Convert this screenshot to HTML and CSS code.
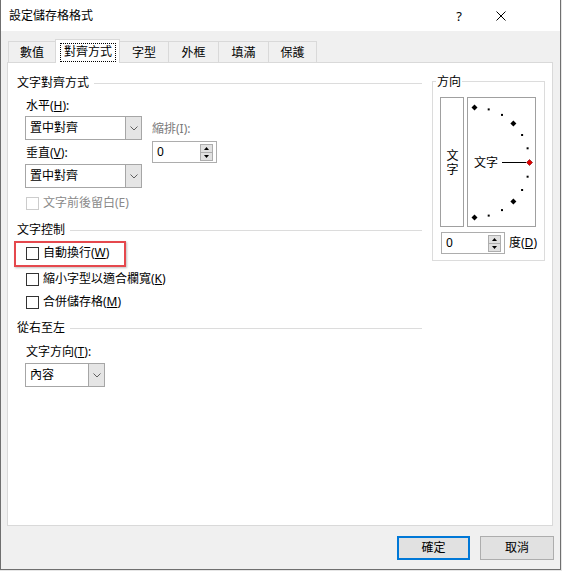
FILE: index.html
```html
<!DOCTYPE html>
<html lang="zh-Hant">
<head>
<meta charset="utf-8">
<title>設定儲存格格式</title>
<link rel="stylesheet" href="styles.css">
</head>
<body>
<div class="dialog">
  <div class="titlebar">
    <span class="title">設定儲存格格式</span>
    <span class="help">?</span>
    <span class="close"><svg width="10" height="10" viewBox="0 0 10 10"><path d="M0.5 0.5L9.5 9.5M9.5 0.5L0.5 9.5" stroke="#000" stroke-width="1" fill="none"/></svg></span>
  </div>

  <div class="tabs">
    <div class="tab t1">數值</div>
    <div class="tab t2 active"><span class="focus">對齊方式</span></div>
    <div class="tab t3">字型</div>
    <div class="tab t4">外框</div>
    <div class="tab t5">填滿</div>
    <div class="tab t6">保護</div>
  </div>

  <div class="panel">
    <div class="left">
      <div class="ghead ghead1"><span>文字對齊方式</span><i class="gline"></i></div>
      <div class="grid1">
        <div class="lbl">水平(<u>H</u>):</div>
        <div></div>
        <div class="combo"><span class="val">置中對齊</span><span class="arrow"><svg width="8" height="5" viewBox="0 0 8 5"><path d="M0.5 0.5L4 4L7.5 0.5" stroke="#5f5f5f" fill="none"/></svg></span></div>
        <div class="lbl grey indent-lbl">縮排(I):</div>
        <div class="lbl row3lbl">垂直(<u>V</u>):</div>
        <div class="spin spin1"><span class="sval">0</span><span class="sbtns"><span class="sb"><svg width="5" height="3" viewBox="0 0 5 3"><path d="M0 3L2.5 0L5 3Z" fill="#000"/></svg></span><span class="sb"><svg width="5" height="3" viewBox="0 0 5 3"><path d="M0 0L2.5 3L5 0Z" fill="#000"/></svg></span></span></div>
        <div class="combo"><span class="val">置中對齊</span><span class="arrow"><svg width="8" height="5" viewBox="0 0 8 5"><path d="M0.5 0.5L4 4L7.5 0.5" stroke="#5f5f5f" fill="none"/></svg></span></div>
        <div></div>
      </div>
      <div class="cb cb-dis"><span class="box"></span><span>文字前後留白(E)</span></div>

      <div class="ghead ghead2"><span>文字控制</span><i class="gline"></i></div>
      <div class="cb cb1"><span class="box"></span><span>自動換行(<u>W</u>)</span><span class="mark"></span></div>
      <div class="cb cb2"><span class="box"></span><span>縮小字型以適合欄寬(<u>K</u>)</span></div>
      <div class="cb cb3"><span class="box"></span><span>合併儲存格(<u>M</u>)</span></div>

      <div class="ghead ghead3"><span>從右至左</span><i class="gline"></i></div>
      <div class="lbl dirlbl">文字方向(<u>T</u>):</div>
      <div class="combo combo3"><span class="val">內容</span><span class="arrow"><svg width="8" height="5" viewBox="0 0 8 5"><path d="M0.5 0.5L4 4L7.5 0.5" stroke="#5f5f5f" fill="none"/></svg></span></div>
    </div>

    <div class="orient">
      <div class="otitle">方向</div>
      <div class="orow">
        <div class="vbox"><span class="vt">文字</span></div>
        <div class="dial">
          <svg width="67" height="128" viewBox="0 0 67 128">
            <g fill="#000">
              <path d="M6.5 6.5L9.5 9.5L6.5 12.5L3.5 9.5Z"/>
              <rect x="19.7" y="10.4" width="2" height="2"/>
              <rect x="33" y="15.9" width="2" height="2"/>
              <path d="M45.4 22.6L48.4 25.6L45.4 28.6L42.4 25.6Z"/>
              <rect x="53.1" y="36" width="2" height="2"/>
              <rect x="58.6" y="49.3" width="2" height="2"/>
              <rect x="58.6" y="77.7" width="2" height="2"/>
              <rect x="53.1" y="91" width="2" height="2"/>
              <path d="M45.4 100.4L48.4 103.4L45.4 106.4L42.4 103.4Z"/>
              <rect x="33" y="111.1" width="2" height="2"/>
              <rect x="19.7" y="116.6" width="2" height="2"/>
              <path d="M6.5 116.5L9.5 119.5L6.5 122.5L3.5 119.5Z"/>
            </g>
            <line x1="34" y1="64.5" x2="58" y2="64.5" stroke="#000" stroke-width="1"/>
            <path d="M61.5 61.5L64.5 64.5L61.5 67.5L58.5 64.5Z" fill="#e00000" stroke="#7a0000" stroke-width="0.6"/>
            <text x="6" y="69" class="dialtext">文字</text>
          </svg>
        </div>
      </div>
      <div class="ospin">
        <div class="spin spin2"><span class="sval">0</span><span class="sbtns"><span class="sb"><svg width="5" height="3" viewBox="0 0 5 3"><path d="M0 3L2.5 0L5 3Z" fill="#000"/></svg></span><span class="sb"><svg width="5" height="3" viewBox="0 0 5 3"><path d="M0 0L2.5 3L5 0Z" fill="#000"/></svg></span></span></div>
        <span class="deg">度(<u>D</u>)</span>
      </div>
    </div>
  </div>

  <div class="buttons">
    <div class="btn ok">確定</div>
    <div class="btn cancel">取消</div>
  </div>
</div>
</body>
</html>
```

FILE: styles.css
```css
* { box-sizing: border-box; }
html, body { margin: 0; padding: 0; }
body {
  width: 562px;
  height: 571px;
  background: #e6e6e6;
  font-family: "Noto Sans", "Noto Sans CJK TC", sans-serif;
  font-size: 12px;
  line-height: 16px;
  color: #000;
  overflow: hidden;
}
u { text-decoration: underline; text-underline-offset: 1px; }

.dialog {
  width: 561px;
  height: 570px;
  border: 1px solid #6f6f6f;
  border-top: 0;
  background: #f0f0f0;
  display: flex;
  flex-direction: column;
}

.titlebar {
  height: 31px;
  flex: none;
  background: #fff;
  display: flex;
  align-items: center;
  padding-left: 8px;
}
.title { flex: 1; }
.help { margin-right: 34px; font-size: 13px; line-height: 16px; }
.close { width: 10px; height: 10px; margin-right: 54px; display: flex; }

.tabs {
  display: flex;
  align-items: flex-end;
  height: 23px;
  flex: none;
  margin: 8px 0 0 7px;
}
.tab {
  height: 21px;
  border: 1px solid #d9d9d9;
  border-bottom: 0;
  background: #f0f0f0;
  margin-left: -1px;
  text-align: center;
  line-height: 19px;
  padding-top: 1px;
}
.t1 { width: 48px; margin-left: 0; }
.t2 { width: 65px; }
.t3 { width: 50px; }
.t4 { width: 51px; }
.t5 { width: 51px; }
.t6 { width: 49px; }
.tab.active {
  height: 24px;
  background: #fff;
  position: relative;
  z-index: 1;
  margin-bottom: -1px;
  padding: 3px 0 0 4px;
}
.focus {
  display: block;
  width: 56px;
  height: 19px;
  border: 1px dotted #000;
  line-height: 16px;
  text-align: center;
}

.panel {
  flex: none;
  width: 546px;
  height: 464px;
  margin-left: 6px;
  border: 1px solid #d9d9d9;
  background: #fff;
  display: flex;
  align-items: flex-start;
  padding: 12px 7px 0 9px;
}

.left {
  width: 405px;
  display: flex;
  flex-direction: column;
}
.ghead {
  display: flex;
  align-items: center;
  height: 16px;
}
.gline {
  flex: 1;
  height: 0;
  border-top: 1px solid #dcdcdc;
  margin-left: 5px;
}
.ghead2 { margin-top: 11px; }
.ghead3 { margin-top: 10px; }

.grid1 {
  margin-top: 7px;
  padding-left: 8px;
  display: grid;
  grid-template-columns: 117px 65px;
  grid-template-rows: 18px 24px 24px 24px;
  column-gap: 10px;
}
.lbl { padding-left: 1px; }
.grey { color: #7a7a7a; }
.indent-lbl { align-self: center; padding-top: 2px; padding-left: 0; }
.row3lbl { align-self: center; padding-top: 1px; }

.combo {
  display: flex;
  height: 24px;
  border: 1px solid #a6a6a6;
  background: #fff;
}
.combo .val { flex: 1; padding-left: 4px; line-height: 22px; }
.combo .arrow {
  width: 16px;
  background: #e5e5e5;
  border-left: 1px solid #a6a6a6;
  display: flex;
  align-items: center;
  justify-content: center;
}
.combo3 { width: 80px; margin: 3px 0 0 8px; }

.spin {
  display: flex;
  align-items: center;
  height: 22px;
  border: 1px solid #adadad;
  background: #fff;
}
.spin1 { width: 65px; align-self: start; margin-top: 1px; }
.spin2 { width: 64px; }
.sval { flex: 1; padding-left: 4px; line-height: 20px; }
.sbtns {
  width: 13px;
  height: 17px;
  margin-right: 3px;
  display: flex;
  flex-direction: column;
}
.sb {
  flex: 1;
  border: 1px solid #adadad;
  background: #e1e1e1;
  display: flex;
  align-items: center;
  justify-content: center;
}
.sb + .sb { margin-top: -1px; }

.cb {
  display: flex;
  align-items: center;
  height: 16px;
  padding-left: 9px;
  position: relative;
}
.box {
  width: 13px;
  height: 13px;
  border: 1px solid #333;
  background: #fff;
  margin-right: 4px;
  flex: none;
}
.cb-dis { margin-top: 7px; color: #8a8a8a; }
.cb-dis .box { border-color: #cccccc; }
.cb1 { margin-top: 7px; }
.cb2 { margin-top: 10px; }
.cb3 { margin-top: 7px; }
.mark {
  position: absolute;
  left: -3px;
  top: -4px;
  width: 112px;
  height: 26px;
  border: 2px solid #e5484d;
  box-shadow: 1px 1px 2px rgba(0, 0, 0, 0.25);
}
.dirlbl { margin-top: 8px; padding-left: 9px; }

.orient {
  margin: 6px 0 0 10px;
  width: 113px;
  height: 180px;
  border: 1px solid #dcdcdc;
}
.otitle {
  width: fit-content;
  margin: -8px 0 0 3px;
  padding: 0 1px;
  background: #fff;
}
.orow {
  display: flex;
  gap: 3px;
  margin-top: 7px;
  padding-left: 7px;
}
.vbox {
  width: 24px;
  height: 130px;
  border: 1px solid #a0a0a0;
  display: flex;
  align-items: center;
  justify-content: center;
}
.vt {
  writing-mode: vertical-rl;
  font-family: "Noto Sans CJK TC", sans-serif;
  letter-spacing: 2px;
  line-height: 16px;
  padding-top: 2px;
}
.dial {
  width: 69px;
  height: 130px;
  border: 1px solid #a0a0a0;
}
.dial svg { display: block; }
.dialtext {
  font-family: "Noto Sans CJK TC", sans-serif;
  font-size: 12px;
  fill: #000;
}
.ospin {
  display: flex;
  align-items: center;
  margin-top: 5px;
  padding-left: 8px;
}
.deg { margin-left: 4px; }

.buttons {
  display: flex;
  justify-content: flex-end;
  gap: 10px;
  margin-top: 10px;
  padding-right: 6px;
}
.btn {
  height: 24px;
  background: #e1e1e1;
  border: 1px solid #adadad;
  text-align: center;
  line-height: 22px;
}
.ok { width: 73px; border: 2px solid #0078d7; line-height: 20px; }
.cancel { width: 74px; }
```
